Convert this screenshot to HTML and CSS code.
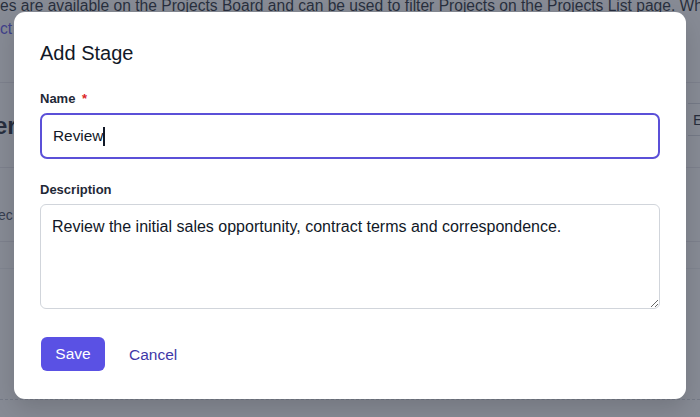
FILE: index.html
```html
<!DOCTYPE html>
<html lang="en">
<head>
<meta charset="utf-8">
<title>Add Stage</title>
<link rel="stylesheet" href="styles.css">
</head>
<body>
<div class="page">
  <div class="intro">
    <p class="intro-line">es are available on the Projects Board and can be used to filter Projects on the Projects List page. When a Project</p>
    <p class="intro-line"><a class="link" href="#">ct</a></p>
  </div>
  <div class="section-head">
    <span class="section-title">er</span>
    <span class="head-btn">Edit</span>
  </div>
  <div class="row"><span class="row-text">ec</span></div>
  <div class="row-thin"></div>
  <div class="row-rest"></div>
</div>

<div class="overlay">
  <div class="modal">
    <h2 class="modal-title">Add Stage</h2>
    <div class="field">
      <label class="label">Name <span class="req">*</span></label>
      <div class="input input-focus"><span>Review</span><span class="caret"></span></div>
    </div>
    <div class="field field-desc">
      <label class="label" for="desc">Description</label>
      <textarea id="desc" class="textarea">Review the initial sales opportunity, contract terms and correspondence.</textarea>
    </div>
    <div class="actions">
      <button class="btn-primary" type="button">Save</button>
      <a class="btn-link" href="#">Cancel</a>
    </div>
  </div>
</div>
</body>
</html>
```

FILE: styles.css
```css
* { box-sizing: border-box; }

html, body {
  margin: 0;
  padding: 0;
  width: 700px;
  height: 417px;
  overflow: hidden;
  font-family: "Liberation Sans", Arial, Helvetica, sans-serif;
  background: #ffffff;
}

.page {
  position: relative;
  width: 700px;
  height: 417px;
  overflow: hidden;
  color: #111827;
}

.intro {
  margin-top: -6px;
  height: 89px;
  border-bottom: 1px solid #e5e7eb;
}

.intro-line {
  margin: 0;
  font-size: 15.6px;
  line-height: 23px;
  white-space: nowrap;
  color: #111827;
}

.link {
  color: #4f46e5;
  text-decoration: none;
}

.section-head {
  height: 85px;
  display: flex;
  align-items: center;
  justify-content: space-between;
  border-bottom: 1px solid #e5e7eb;
}

.section-title {
  font-size: 24px;
  font-weight: 700;
  color: #111827;
  margin-left: -6px;
  margin-top: 2px;
}

.head-btn {
  width: 40px;
  margin-right: -28px;
  height: 33px;
  padding: 0 0 0 5px;
  border-top: 1px solid #d1d5db;
  border-bottom: 1px solid #d1d5db;
  display: flex;
  align-items: center;
  font-size: 15px;
  color: #111827;
  margin-top: -12px;
}

.row {
  height: 74px;
  display: flex;
  align-items: center;
  border-bottom: 1px solid #e5e7eb;
}

.row-text {
  font-size: 14px;
  color: #374151;
  margin-left: -2px;
  margin-top: 20px;
}

.row-thin {
  height: 27px;
  border-bottom: 1px solid #eef0f3;
}

.row-rest {
  height: 131px;
  border-bottom: 1px dashed #d1d5db;
}

.overlay {
  position: absolute;
  inset: 0;
  background: rgba(55, 62, 78, 0.6);
  padding: 12px 14px;
}

.modal {
  width: 672px;
  height: 387px;
  background: #ffffff;
  border-radius: 11px;
  box-shadow: 0 10px 25px rgba(0, 0, 0, 0.15);
  padding: 27px 26px 27px 26px;
  display: flex;
  flex-direction: column;
}

.modal-title {
  margin: 0;
  font-size: 20px;
  line-height: 28px;
  font-weight: 400;
  color: #111827;
}

.field {
  margin-top: 22px;
  display: flex;
  flex-direction: column;
}

.field-desc {
  margin-top: 21px;
}

.label {
  font-size: 13px;
  line-height: 20px;
  font-weight: 700;
  color: #1f2937;
  margin-bottom: 4px;
}

.req {
  color: #dc2626;
  margin-left: 3px;
}

.input {
  height: 46px;
  border: 2px solid #5b50d8;
  border-radius: 7px;
  padding: 0 11px;
  display: flex;
  align-items: center;
  font-size: 15.4px;
  color: #111827;
}

.caret {
  display: inline-block;
  width: 1.5px;
  height: 19px;
  background: #111827;
  margin-left: 0;
}

.textarea {
  display: block;
  width: 100%;
  height: 105px;
  border: 1px solid #d1d5db;
  border-radius: 6px;
  padding: 10px 11px;
  font-family: "Liberation Sans", Arial, Helvetica, sans-serif;
  font-size: 16px;
  line-height: 24px;
  color: #111827;
  resize: vertical;
  outline: none;
  margin: 0;
}

.actions {
  margin-top: 28px;
  display: flex;
  align-items: center;
  gap: 24px;
}

.btn-primary {
  width: 64px;
  height: 34px;
  margin-left: 1px;
  border: none;
  border-radius: 6px;
  background: #5a51e4;
  color: #ffffff;
  font-family: "Liberation Sans", Arial, Helvetica, sans-serif;
  font-size: 15.5px;
  padding: 0;
  cursor: pointer;
}

.btn-link {
  color: #3f38a8;
  font-size: 15.5px;
  text-decoration: none;
  margin-top: 1px;
}
```
